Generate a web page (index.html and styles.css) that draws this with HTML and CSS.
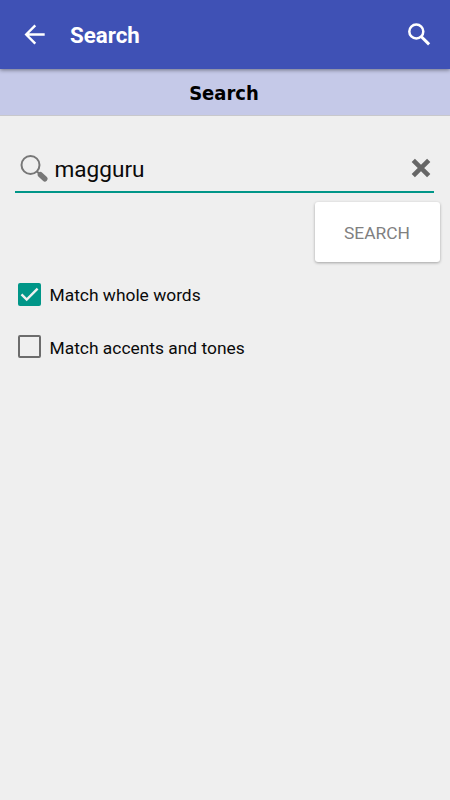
FILE: index.html
```html
<!DOCTYPE html>
<html lang="en">
<head>
<meta charset="utf-8">
<title>Search</title>
<link rel="stylesheet" href="styles.css">
</head>
<body>
<header class="appbar">
  <svg class="back" width="22" height="22" viewBox="0 0 22 22"><path d="M20.7 10.5H2.5M11.3 1.3 2.2 10.5l9.1 9.2" fill="none" stroke="#fff" stroke-width="2.4"/></svg>
  <h1 class="title">Search</h1>
  <svg class="find" width="24" height="24" viewBox="0 0 24 24"><circle cx="9.3" cy="8.5" r="7" fill="none" stroke="#fff" stroke-width="2.5"/><path d="m14.4 13.7 7.7 7.7" stroke="#fff" stroke-width="3"/></svg>
</header>
<h2 class="subtitle">Search</h2>
<main>
  <div class="field">
    <svg class="lens" width="30" height="30" viewBox="0 0 30 30"><circle cx="10.5" cy="11" r="9" fill="none" stroke="#777" stroke-width="2"/><path d="m17 17.5 3.5 3.5" stroke="#777" stroke-width="2"/><path d="m20.4 20.7 4.4 4.1" stroke="#777" stroke-width="5.4" stroke-linecap="round"/></svg>
    <span class="query">magguru</span>
    <svg class="clear" width="20" height="20" viewBox="0 0 20 20"><path d="m2.3 2.3 15.4 15.4M17.7 2.3 2.3 17.7" stroke="#666" stroke-width="4.6"/></svg>
  </div>
  <button class="go">SEARCH</button>
  <div class="option">
    <span class="box checked"><svg width="23" height="23" viewBox="0 0 23 23"><path d="m3.5 11.4 5.2 5.2L19.6 5.7" fill="none" stroke="#f0f0f0" stroke-width="2.4"/></svg></span>
    <span class="label">Match whole words</span>
  </div>
  <div class="option">
    <span class="box"></span>
    <span class="label">Match accents and tones</span>
  </div>
</main>
</body>
</html>
```
FILE: styles.css
```css
* { box-sizing: border-box; }
body {
  margin: 0;
  height: 800px;
  background: #efefef;
  color: #0a0a0a;
  font-family: Roboto, sans-serif;
  overflow: hidden;
}
svg { display: block; flex: none; }
.appbar {
  position: relative;
  display: flex;
  align-items: center;
  height: 69px;
  padding: 0 19px 0 24px;
  background: #3f51b5;
  box-shadow: 0 1px 4px rgba(0, 0, 0, .45);
}
.title {
  flex: 1;
  margin: 0 0 0 24px;
  color: #fff;
  font-size: 22.3px;
  font-weight: 700;
  line-height: 30px;
}
.subtitle {
  height: 47px;
  margin: 0;
  background: #c5c9e8;
  border-bottom: 1px solid #c8c8cc;
  color: #000;
  font: bold 20px/49px "DejaVu Sans Condensed", "DejaVu Sans", sans-serif;
  font-stretch: condensed;
  text-align: center;
  padding-right: 2px;
}
main { display: flex; flex-direction: column; }
.field {
  display: flex;
  align-items: center;
  height: 47px;
  margin: 30px 16px 0 14.5px;
  padding: 0 3px 2px 5.5px;
  border-bottom: 2px solid #009688;
}
.lens { margin-top: 3px; }
.query {
  flex: 1;
  margin-left: 4.5px;
  font-size: 22.6px;
  line-height: 30px;
  padding-top: 5px;
}
.go {
  align-self: flex-end;
  width: 125px;
  height: 60px;
  margin: 9px 10.5px 0 0;
  padding: 2px 0 0;
  border: 0;
  border-radius: 3px;
  background: #fff;
  box-shadow: 0 1px 3px rgba(0, 0, 0, .32);
  color: #808080;
  font: 17.4px Roboto, sans-serif;
}
.option {
  display: flex;
  align-items: center;
  height: 52.5px;
  padding-left: 18px;
  font-size: 17.4px;
  gap: 8.5px;
}
.go + .option { margin-top: 6px; }
.label { padding-top: 2px; }
.box {
  width: 23px;
  height: 23px;
  border: 2px solid #6c6c6c;
  border-radius: 2px;
}
.checked { border: 0; background: #009688; }
```
